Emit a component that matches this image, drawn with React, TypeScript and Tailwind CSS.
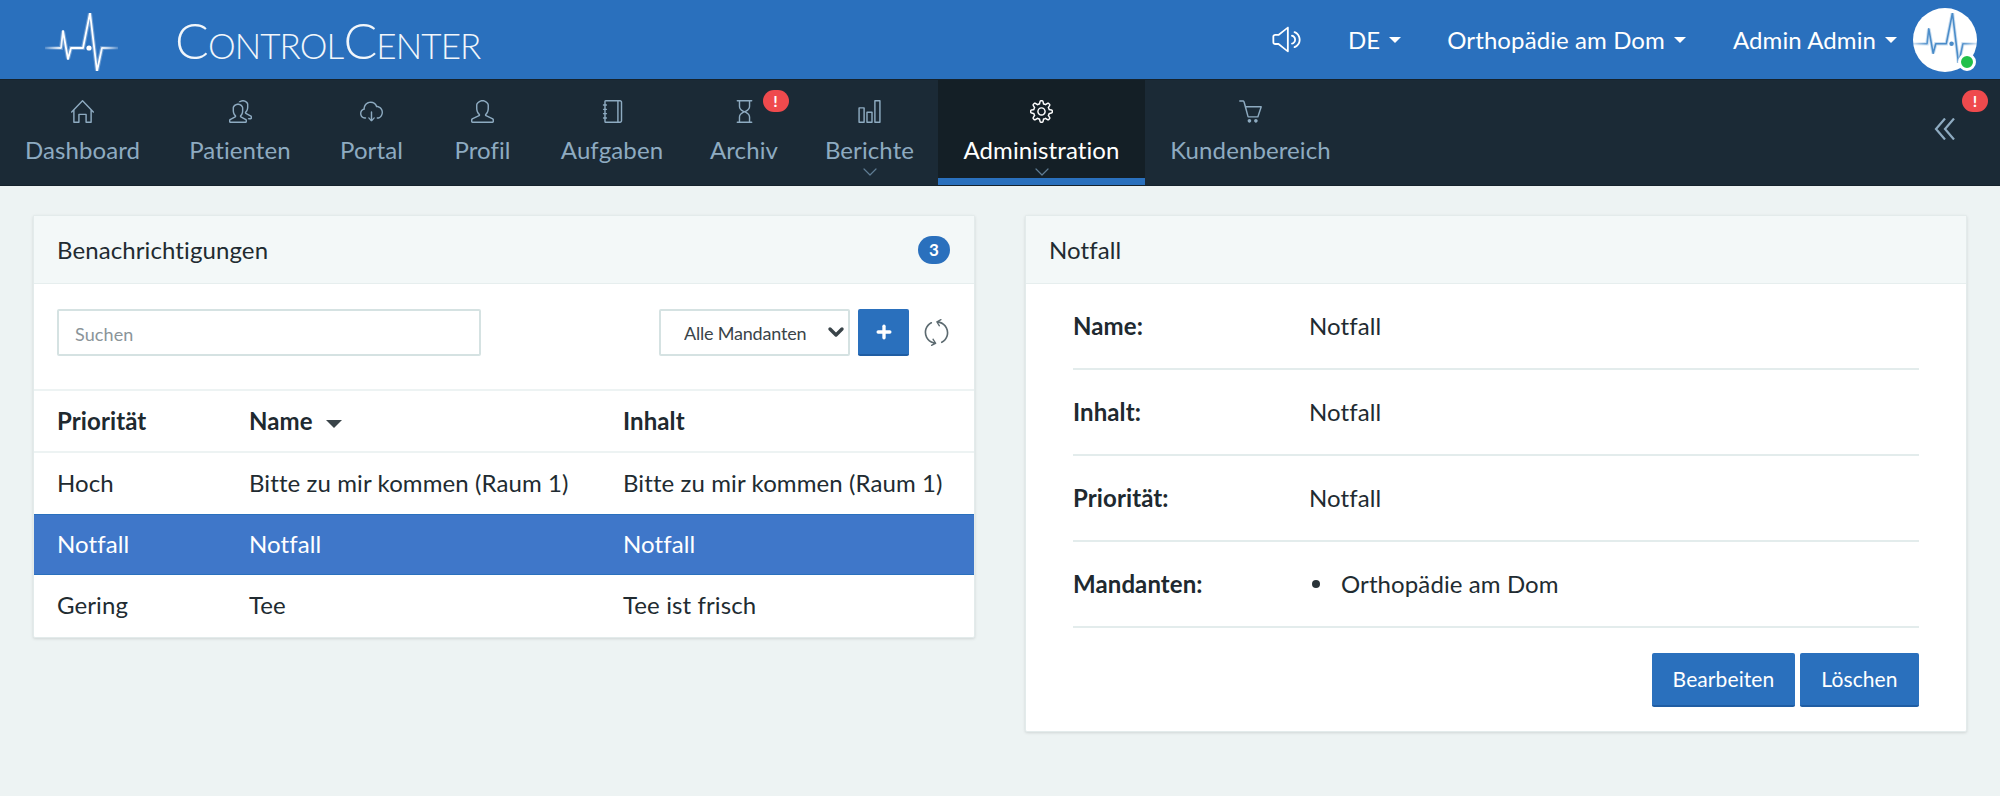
import { SlHome, SlPeople, SlCloudDownload, SlUser, SlNotebook, SlHourglass, SlChart, SlSettings, SlBasket, SlVolume2, SlRefresh } from 'react-icons/sl';
import { ChevronDown, Plus } from 'lucide-react';

const font = "font-['Lato','Liberation_Sans',sans-serif]";

const navItems = [
  { label: 'Dashboard', icon: SlHome, width: 'w-[165px]' },
  { label: 'Patienten', icon: SlPeople, width: 'w-[150px]' },
  { label: 'Portal', icon: SlCloudDownload, width: 'w-[113px]' },
  { label: 'Profil', icon: SlUser, width: 'w-[109px]' },
  { label: 'Aufgaben', icon: SlNotebook, width: 'w-[150px]' },
  { label: 'Archiv', icon: SlHourglass, width: 'w-[114px]', badge: true },
  { label: 'Berichte', icon: SlChart, width: 'w-[137px]', chevron: true },
  { label: 'Administration', icon: SlSettings, width: 'w-[207px]', chevron: true, active: true },
  { label: 'Kundenbereich', icon: SlBasket, width: 'w-[211px]' },
];

const rows = [
  { prio: 'Hoch', name: 'Bitte zu mir kommen (Raum 1)', content: 'Bitte zu mir kommen (Raum 1)', style: 'h-[62px]' },
  { prio: 'Notfall', name: 'Notfall', content: 'Notfall', style: 'h-[60px] border-y border-[#2a70bd] bg-[#3f77c9] text-white' },
  { prio: 'Gering', name: 'Tee', content: 'Tee ist frisch', style: 'h-[63px]' },
];

const Caret = () => <span className="ml-[9px] inline-block h-0 w-0 border-x-[6px] border-t-[6px] border-x-transparent border-t-white" />;

const Alert = () => <span className="absolute flex h-[22px] w-[26px] items-center justify-center rounded-full bg-[#ef4a4d] text-[16px] leading-none font-bold text-white">!</span>;

const pulsePoints = '0,35 16,35 18,18 21,35 23,46 26,35 38,35 45,0 52,58 57,35 73,35';

const Pulse = ({ color, width, id }: { color: string; width: number; id: string }) => (
  <svg viewBox="0 0 73 58" className="block" width={width} height={width * 58 / 73}>
    <defs>
      <linearGradient id={id} gradientUnits="userSpaceOnUse" x1="0" y1="0" x2="73" y2="0">
        <stop offset="0" stopColor={color} stopOpacity="0.15" />
        <stop offset="0.25" stopColor={color} />
        <stop offset="0.75" stopColor={color} />
        <stop offset="1" stopColor={color} stopOpacity="0.15" />
      </linearGradient>
    </defs>
    <polyline points={pulsePoints} fill="none" stroke={`url(#${id})`} strokeWidth="4" opacity="0.3" />
    <polyline points={pulsePoints} fill="none" stroke={`url(#${id})`} strokeWidth="1.8" strokeLinejoin="round" />
    <circle cx="44" cy="35" r="2.6" fill={color} />
  </svg>
);

const DetailRow = ({ label, children }: { label: string; children: React.ReactNode }) => (
  <div className="flex h-[86px] items-center border-b-2 border-[#e3ecec]">
    <div className="w-[236px] font-bold text-[#20292f]">{label}</div>
    <div>{children}</div>
  </div>
);

export default function App() {
  return (
    <div className={`${font} h-[796px] w-[2000px] overflow-hidden bg-[#edf3f3] text-[24px] tracking-[0.1px] text-[#212b31]`}>
      <header className="flex h-[80px] items-center border-b border-[#15222c] bg-[#2a70bd] pr-[23px] text-white">
        <div className="ml-[45px] mt-[5px]"><Pulse color="#ffffff" width={73} id="logo-line" /></div>
        <div className="ml-[57px] text-[35px] leading-none font-light tracking-[-0.9px] text-[#f1f6fb]">
          <span className="text-[50px]">C</span><span className="uppercase">ontrol</span><span className="text-[50px]">C</span><span className="uppercase">enter</span>
        </div>
        <SlVolume2 className="ml-auto text-[29px]" />
        <span className="ml-[47px] flex items-center">DE<Caret /></span>
        <span className="ml-[46px] flex items-center">Orthopädie am Dom<Caret /></span>
        <span className="ml-[47px] flex items-center">Admin Admin<Caret /></span>
        <div className="relative ml-[16px] flex h-[64px] w-[64px] items-center justify-center rounded-full bg-white">
          <div className="-mt-[3px]"><Pulse color="#4a8cc9" width={64} id="avatar-line" /></div>
          <span className="absolute bottom-[1px] right-[1px] h-[18px] w-[18px] rounded-full border-[3px] border-white bg-[#22c04a]" />
        </div>
      </header>

      <nav className="relative flex h-[106px] border-b border-[#15222c] bg-[#1b2a36] text-[#8eabc1]">
        {navItems.map(item => {
          const Icon = item.icon;
          return (
            <div key={item.label} className={`relative flex ${item.width} flex-col items-center pt-[20px] ${item.active ? 'border-b-[7px] border-[#2a70bd] bg-[#141f26] text-white' : ''}`}>
              <span className="relative">
                <Icon className="text-[23px]" />
                {item.badge && <span className="absolute -top-[10px] left-[30px]"><Alert /></span>}
              </span>
              <span className="mt-[11px] leading-[32px]">{item.label}</span>
              {item.chevron && <ChevronDown className="absolute top-[80px] h-6 w-6 text-[#5f7c93]" strokeWidth={1.2} />}
            </div>
          );
        })}
        <div className="absolute right-[12px] top-[10px]">
          <span className="relative block h-[22px] w-[26px]"><Alert /></span>
        </div>
        <svg viewBox="0 0 22 22" className="absolute left-[1934px] top-[38px] h-[22px] w-[22px]" fill="none" stroke="#8eabc1" strokeWidth="2.2">
          <polyline points="11,0.5 2,11 11,21.5" />
          <polyline points="20,0.5 11,11 20,21.5" />
        </svg>
      </nav>

      <main className="flex items-start gap-[50px] px-[33px] pt-[29px]">
        <section className="flex-1 overflow-hidden rounded-[2px] border border-[#e3ebeb] bg-white shadow-[0_1px_3px_rgba(0,0,0,0.12)]">
          <div className="flex h-[68px] items-center justify-between border-b border-[#e6eeee] bg-[#f3f8f8] pl-[23px] pr-[24px]">
            <span>Benachrichtigungen</span>
            <span className="flex h-[28px] w-[32px] items-center justify-center rounded-full bg-[#2a70bd] text-[17px] font-bold text-white">3</span>
          </div>
          <div className="flex items-center pb-[33px] pl-[23px] pr-[24px] pt-[25px]">
            <input placeholder="Suchen" className="h-[47px] w-[424px] rounded-[2px] border-2 border-[#d5e2e2] px-[16px] pt-[2px] text-[18px] outline-none placeholder:text-[#8a9499]" />
            <div className="relative ml-auto">
              <select defaultValue="alle" className="block h-[47px] w-[191px] appearance-none rounded-[2px] border-2 border-[#d5e2e2] bg-white pl-[23px] pt-[2px] text-[18px] tracking-[-0.2px] text-[#3a4449] outline-none">
                <option value="alle">Alle Mandanten</option>
              </select>
              <ChevronDown className="pointer-events-none absolute right-[2px] top-[11px] h-[24px] w-[24px] text-[#3a4449]" strokeWidth={3.4} />
            </div>
            <button className="ml-[8px] flex h-[47px] w-[51px] items-center justify-center rounded-[2px] border-b-2 border-[#1f5da3] bg-[#2a70bd] text-white">
              <Plus className="h-[20px] w-[20px]" strokeWidth={4} />
            </button>
            <SlRefresh className="ml-[14px] text-[27px] text-[#5c6a70]" />
          </div>
          <table className="w-full table-fixed border-t-2 border-[#edf3f3]">
            <thead>
              <tr className="h-[62px] border-b-2 border-[#edf3f3] text-left font-bold text-[#20292f]">
                <th className="w-[215px] pl-[23px]">Priorität</th>
                <th className="w-[374px] pl-0">Name <span className="ml-[7px] inline-block h-0 w-0 translate-y-[-2px] border-x-[8px] border-t-[8px] border-x-transparent border-t-[#3a4449]" /></th>
                <th>Inhalt</th>
              </tr>
            </thead>
            <tbody>
              {rows.map(row => (
                <tr key={row.prio} className={row.style}>
                  <td className="pb-[1px] pl-[23px]">{row.prio}</td>
                  <td className="pb-[1px]">{row.name}</td>
                  <td className="whitespace-nowrap pb-[1px]">{row.content}</td>
                </tr>
              ))}
            </tbody>
          </table>
        </section>

        <section className="flex-1 overflow-hidden rounded-[2px] border border-[#e3ebeb] bg-white shadow-[0_1px_3px_rgba(0,0,0,0.12)]">
          <div className="flex h-[68px] items-center border-b border-[#e6eeee] bg-[#f3f8f8] pl-[23px]">Notfall</div>
          <div className="px-[47px] pb-[24px]">
            <DetailRow label="Name:">Notfall</DetailRow>
            <DetailRow label="Inhalt:">Notfall</DetailRow>
            <DetailRow label="Priorität:">Notfall</DetailRow>
            <DetailRow label="Mandanten:">
              <ul className="flex items-center">
                <li className="flex items-center"><span className="mx-[3px] mr-[21px] h-[8px] w-[8px] rounded-full bg-[#2a3439]" />Orthopädie am Dom</li>
              </ul>
            </DetailRow>
            <div className="mt-[25px] flex justify-end gap-[5px] text-[21px] text-white">
              <button className="h-[54px] w-[143px] rounded-[2px] border-b-2 border-[#1f5da3] bg-[#2a70bd]">Bearbeiten</button>
              <button className="h-[54px] w-[119px] rounded-[2px] border-b-2 border-[#1f5da3] bg-[#2a70bd]">Löschen</button>
            </div>
          </div>
        </section>
      </main>
    </div>
  );
}
